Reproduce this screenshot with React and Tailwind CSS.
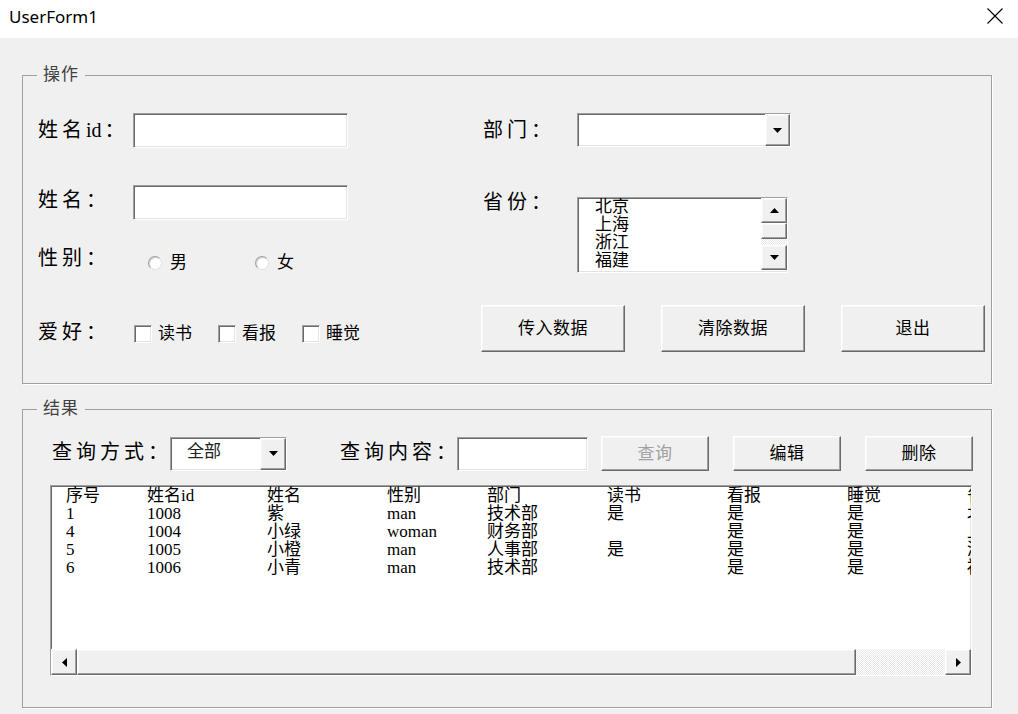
import React from 'react';

const F = "[font-family:'Liberation_Serif','Noto_Sans_CJK_SC',serif]";
const SUNKEN = "border border-t-[#a0a0a0] border-l-[#a0a0a0] border-r-white border-b-white shadow-[inset_1px_1px_0_#696969,inset_-1px_-1px_0_#e3e3e3]";
const RAISED = "border border-t-white border-l-white border-r-[#696969] border-b-[#696969] shadow-[inset_-1px_-1px_0_#a0a0a0,inset_1px_1px_0_#f8f8f8] bg-[#f0f0f0]";
const CHECKER = "bg-[repeating-conic-gradient(#ffffff_0_25%,#e8e8e8_0_50%)] bg-size-[2px_2px]";
const LABEL = "shrink-0 whitespace-nowrap text-[20px] tracking-[4px] leading-[24px]";

function Tri({ dir }) {
  if (dir === 'down')
    return (
      <svg width="9" height="5" viewBox="0 0 9 5"><polygon points="0,0 9,0 4.5,5" fill="#000" /></svg>
    );
  if (dir === 'up')
    return (
      <svg width="9" height="5" viewBox="0 0 9 5"><polygon points="0,5 9,5 4.5,0" fill="#000" /></svg>
    );
  if (dir === 'left')
    return (
      <svg width="5" height="9" viewBox="0 0 5 9"><polygon points="5,0 5,9 0,4.5" fill="#000" /></svg>
    );
  return (
    <svg width="5" height="9" viewBox="0 0 5 9"><polygon points="0,0 0,9 5,4.5" fill="#000" /></svg>
  );
}

function Radio({ label }) {
  return (
    <div className="flex items-center">
      <div className="w-[14px] h-[14px] rounded-full bg-white border border-t-[#a0a0a0] border-l-[#a0a0a0] border-r-[#e3e3e3] border-b-[#e3e3e3] shadow-[inset_1px_1px_0_#d0d0d0]" />
      <span className="ml-[8px] text-[17px] leading-[20px]">{label}</span>
    </div>
  );
}

function Check({ label }) {
  return (
    <div className="flex items-center w-[84px] shrink-0">
      <div className={`${SUNKEN} w-[18px] h-[18px] bg-white`} />
      <span className="ml-[6px] text-[17px] leading-[20px] whitespace-nowrap">{label}</span>
    </div>
  );
}

function Btn({ children, w, h, disabled }) {
  return (
    <div
      className={`${RAISED} flex items-center justify-center whitespace-nowrap text-[17px] tracking-[0.5px] ${disabled ? 'text-[#a0a0a0]' : 'text-black'}`}
      style={{ width: w, height: h }}
    >
      {children}
    </div>
  );
}

const rows = [
  ['序号', '姓名id', '姓名', '性别', '部门', '读书', '看报', '睡觉', '省份'],
  ['1', '1008', '紫', 'man', '技术部', '是', '是', '是', '北京'],
  ['4', '1004', '小绿', 'woman', '财务部', '', '是', '是', '上海'],
  ['5', '1005', '小橙', 'man', '人事部', '是', '是', '是', '浙江'],
  ['6', '1006', '小青', 'man', '技术部', '', '是', '是', '福建'],
];
const colW = [81, 120, 120, 100, 120, 120, 120, 120, 120];

export default function App() {
  return (
    <div className={`w-[1018px] h-[714px] bg-[#f0f0f0] overflow-hidden flex flex-col ${F} text-black`}>
      {/* title bar */}
      <div className="h-[38px] bg-white flex items-center justify-between pl-[9px] pr-[15px] shrink-0">
        <span className="[font-family:'Noto_Sans',sans-serif] text-[17px] leading-[20px] -mt-[4px]">UserForm1</span>
        <svg width="16" height="16" viewBox="0 0 16 16" className="-mt-[6px]">
          <path d="M0.5 0.5L15.5 15.5M15.5 0.5L0.5 15.5" stroke="#000" strokeWidth="1.1" />
        </svg>
      </div>

      <div className="pl-[22px] pr-[26px] pt-[27px] flex flex-col">
        {/* 操作 */}
        <fieldset className="border border-[#a0a0a0] shadow-[1px_1px_0_#fff]">
          <legend className="ml-[14px] px-[6px] text-[17px] leading-[20px] text-[#404040] tracking-[1px]">操作</legend>
          <div className="flex pl-[15px] pt-[28px] pb-[31px]">
            {/* left column */}
            <div className="w-[443px] shrink-0 flex flex-col">
              <div className="flex items-center h-[35px]">
                <span className={`${LABEL} w-[95px] -mt-[2px]`}>
                  姓名<span className="tracking-[0px]">id</span><span className="ml-[3px]">：</span>
                </span>
                <div className={`${SUNKEN} w-[215px] h-[35px] bg-white shrink-0`} />
              </div>
              <div className="flex items-center h-[35px] mt-[37px]">
                <span className={`${LABEL} w-[95px] -mt-[6px]`}>姓名：</span>
                <div className={`${SUNKEN} w-[215px] h-[35px] bg-white shrink-0`} />
              </div>
              <div className="flex items-center h-[24px] mt-[28px]">
                <span className={`${LABEL} w-[110px] -mt-[4px]`}>性别：</span>
                <div className="w-[107px] pt-[5px]"><Radio label="男" /></div>
                <div className="pt-[5px]"><Radio label="女" /></div>
              </div>
              <div className="flex items-center h-[24px] mt-[50px]">
                <span className={`${LABEL} w-[96px] -mt-[4px]`}>爱好：</span>
                <Check label="读书" />
                <Check label="看报" />
                <Check label="睡觉" />
              </div>
            </div>

            {/* right column */}
            <div className="flex flex-col">
              <div className="flex items-center h-[34px]">
                <span className={`${LABEL} w-[94px] ml-[2px] -mt-[1px]`}>部门：</span>
                <div className={`${SUNKEN} w-[214px] h-[34px] bg-white flex justify-end`}>
                  <div className={`${RAISED} w-[25px] h-full flex items-center justify-center`}>
                    <Tri dir="down" />
                  </div>
                </div>
              </div>
              <div className="flex items-start mt-[43px]">
                <span className={`${LABEL} w-[94px] ml-[2px] leading-[20px]`}>省份：</span>
                <div className={`${SUNKEN} w-[211px] h-[76px] bg-white flex mt-[7px]`}>
                  <div className="flex-1 pl-[17px] text-[17px] leading-[18px] overflow-hidden">
                    <div>北京</div>
                    <div>上海</div>
                    <div>浙江</div>
                    <div>福建</div>
                  </div>
                  <div className="w-[26px] flex flex-col">
                    <div className={`${RAISED} h-[25px] flex items-center justify-center`}><Tri dir="up" /></div>
                    <div className={`${RAISED} h-[16px]`} />
                    <div className={`${CHECKER} h-[6px]`} />
                    <div className={`${RAISED} h-[25px] flex items-center justify-center`}><Tri dir="down" /></div>
                  </div>
                </div>
              </div>
              <div className="flex gap-[36px] mt-[32px]">
                <Btn w={144} h={47}>传入数据</Btn>
                <Btn w={144} h={47}>清除数据</Btn>
                <Btn w={144} h={47}>退出</Btn>
              </div>
            </div>
          </div>
        </fieldset>

        {/* 结果 */}
        <fieldset className="border border-[#a0a0a0] shadow-[1px_1px_0_#fff] mt-[15px]">
          <legend className="ml-[14px] px-[6px] text-[17px] leading-[20px] text-[#404040] tracking-[1px]">结果</legend>
          <div className="flex flex-col pt-[17px] pb-[31px]">
            <div className="flex items-center h-[35px] pl-[29px]">
              <span className={`${LABEL} w-[118px] -mt-[4px]`}>查询方式：</span>
              <div className={`${SUNKEN} w-[117px] h-[34px] bg-white flex shrink-0`}>
                <div className="flex-1 pl-[16px] text-[17px] leading-[28px] text-[#202020]">全部</div>
                <div className={`${RAISED} w-[26px] h-full flex items-center justify-center`}>
                  <Tri dir="down" />
                </div>
              </div>
              <span className={`${LABEL} ml-[53px] w-[117px] -mt-[4px]`}>查询内容：</span>
              <div className={`${SUNKEN} w-[131px] h-[34px] bg-white shrink-0`} />
              <div className="ml-[13px] shrink-0"><Btn w={108} h={35} disabled>查询</Btn></div>
              <div className="ml-[24px] shrink-0"><Btn w={108} h={35}>编辑</Btn></div>
              <div className="ml-[24px] shrink-0"><Btn w={108} h={35}>删除</Btn></div>
            </div>

            <div className={`${SUNKEN} ml-[27px] mt-[14px] w-[922px] h-[191px] bg-white flex flex-col`}>
              <div className="flex-1 overflow-hidden pl-[15px] pt-[1px] text-[17px] leading-[18px]">
                {rows.map((r, i) => (
                  <div key={i} className="flex whitespace-nowrap">
                    {r.map((c, j) => (
                      <div key={j} className="shrink-0" style={{ width: colW[j] }}>{c}</div>
                    ))}
                  </div>
                ))}
              </div>
              <div className="h-[26px] flex shrink-0">
                <div className={`${RAISED} w-[26px] h-full flex items-center justify-center`}><Tri dir="left" /></div>
                <div className={`${RAISED} w-[779px] h-full`} />
                <div className={`${CHECKER} flex-1 h-full`} />
                <div className={`${RAISED} w-[26px] h-full flex items-center justify-center`}><Tri dir="right" /></div>
              </div>
            </div>
          </div>
        </fieldset>
      </div>
    </div>
  );
}
